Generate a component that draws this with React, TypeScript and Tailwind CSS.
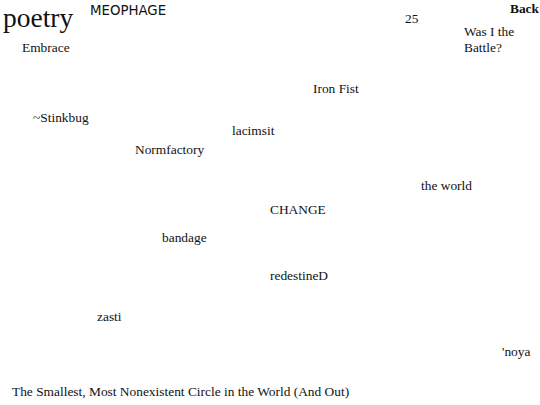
import React from "react";

type Word = {
  text: string;
  className: string;
};

// scattered words, each one placed where it sits on the page
const words: Word[] = [
  { text: "Embrace", className: "left-[22px] top-[40px]" },
  { text: "25", className: "left-[405px] top-[11px]" },
  { text: "Iron Fist", className: "left-[313px] top-[81px]" },
  { text: "~Stinkbug", className: "left-[33px] top-[110px]" },
  { text: "lacimsit", className: "left-[232px] top-[123px]" },
  { text: "Normfactory", className: "left-[135px] top-[142px]" },
  { text: "the world", className: "left-[421px] top-[178px]" },
  { text: "CHANGE", className: "left-[270px] top-[202px]" },
  { text: "bandage", className: "left-[162px] top-[230px]" },
  { text: "redestineD", className: "left-[270px] top-[268px]" },
  { text: "zasti", className: "left-[97px] top-[309px]" },
  { text: "'noya", className: "left-[502px] top-[344px]" },
  { text: "The Smallest, Most Nonexistent Circle in the World (And Out)", className: "left-[12px] top-[384px]" },
];

export default function App(): React.JSX.Element {
  const wordClass: string = "absolute whitespace-nowrap text-[13.4px] leading-4 text-[#111]";

  return (
    <div className="relative w-[540px] h-[405px] overflow-hidden bg-white font-['Liberation_Serif',serif]">
      <h1 className="absolute left-[3px] top-[4px] text-[27.5px] leading-none font-normal text-[#111]">poetry</h1>
      <span className="absolute left-[90px] top-[3px] text-[13.33px] leading-4 text-[#111] font-['DejaVu_Sans',sans-serif]">
        MEOPHAGE
      </span>
      <a className="absolute right-[1px] top-[1px] text-[13.4px] leading-4 font-bold text-[#111]">Back</a>
      <p className="absolute left-[464px] top-[24px] w-[70px] text-[13.4px] leading-4 text-[#111]">
        Was I the
        <br />
        Battle?
      </p>
      {words.map((w) => (
        <span key={w.text} className={`${wordClass} ${w.className}`}>
          {w.text}
        </span>
      ))}
    </div>
  );
}
